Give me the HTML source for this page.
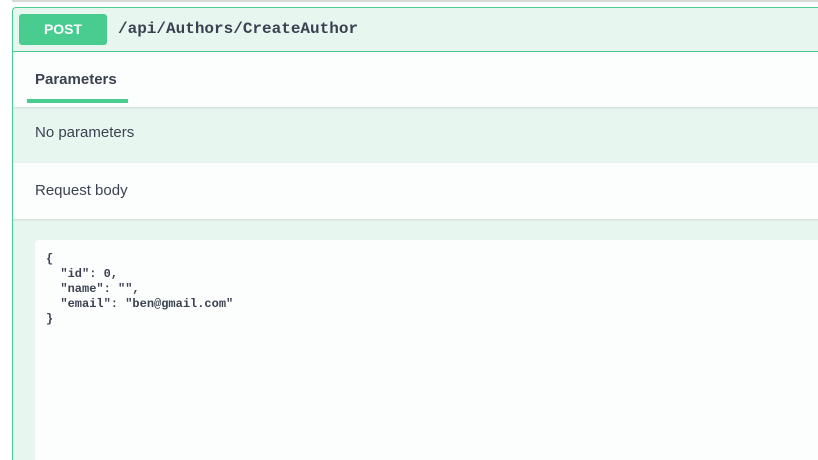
<!DOCTYPE html>
<html><head><style>
html,body{margin:0;width:818px;height:460px;overflow:hidden}
body{background:#fff;font-family:"Liberation Sans",sans-serif;color:#3b4151;position:relative}
.top{position:absolute;left:12px;top:0;width:806px;height:2px;background:#d8d8d8}
.box{position:absolute;left:12px;top:7px;width:820px;height:453px;border:1px solid #49cc90;border-bottom:none;border-radius:4px 4px 0 0;background:#e8f6f0;box-sizing:border-box;overflow:hidden}
.hdr{height:43px;border-bottom:1px solid #49cc90;position:relative}
.badge{position:absolute;left:6px;top:6px;width:88px;height:31px;background:#49cc90;border-radius:3px;color:#fff;font-weight:bold;font-size:14px;text-align:center;line-height:31px}
.path{position:absolute;left:105px;top:11px;font-family:"Liberation Mono",monospace;font-weight:bold;font-size:16px;line-height:20px}
.tabs{height:55px;background:#fcfefd;position:relative;box-shadow:0 1px 2px rgba(0,0,0,.1)}
.tabs .t{position:absolute;left:22px;top:19px;font-weight:bold;font-size:15px}
.tabs .u{position:absolute;left:14px;top:47px;width:101px;height:4px;background:#49cc90}
.row{height:56px;position:relative;font-size:15px}
.row span{position:absolute;left:22px;top:17px}
.rb span{top:19px}
.rb{background:#fcfefd;box-shadow:0 1px 2px rgba(0,0,0,.12)}
.code{position:absolute;left:22px;top:232px;width:800px;height:240px;background:#fcfefd;border-radius:4px;font-family:"Liberation Mono",monospace;font-weight:bold;font-size:12px;line-height:15px;padding:12px 11px;box-sizing:border-box;white-space:pre;color:#3b4151}
</style></head><body>
<div class="top"></div>
<div class="box">
<div class="hdr"><div class="badge">POST</div><div class="path">/api/Authors/CreateAuthor</div></div>
<div class="tabs"><div class="t">Parameters</div><div class="u"></div></div>
<div class="row"><span>No parameters</span></div>
<div class="row rb"><span>Request body</span></div>
<div class="code">{
  "id": 0,
  "name": "",
  "email": "ben@gmail.com"
}</div>
</div>
</body></html>
